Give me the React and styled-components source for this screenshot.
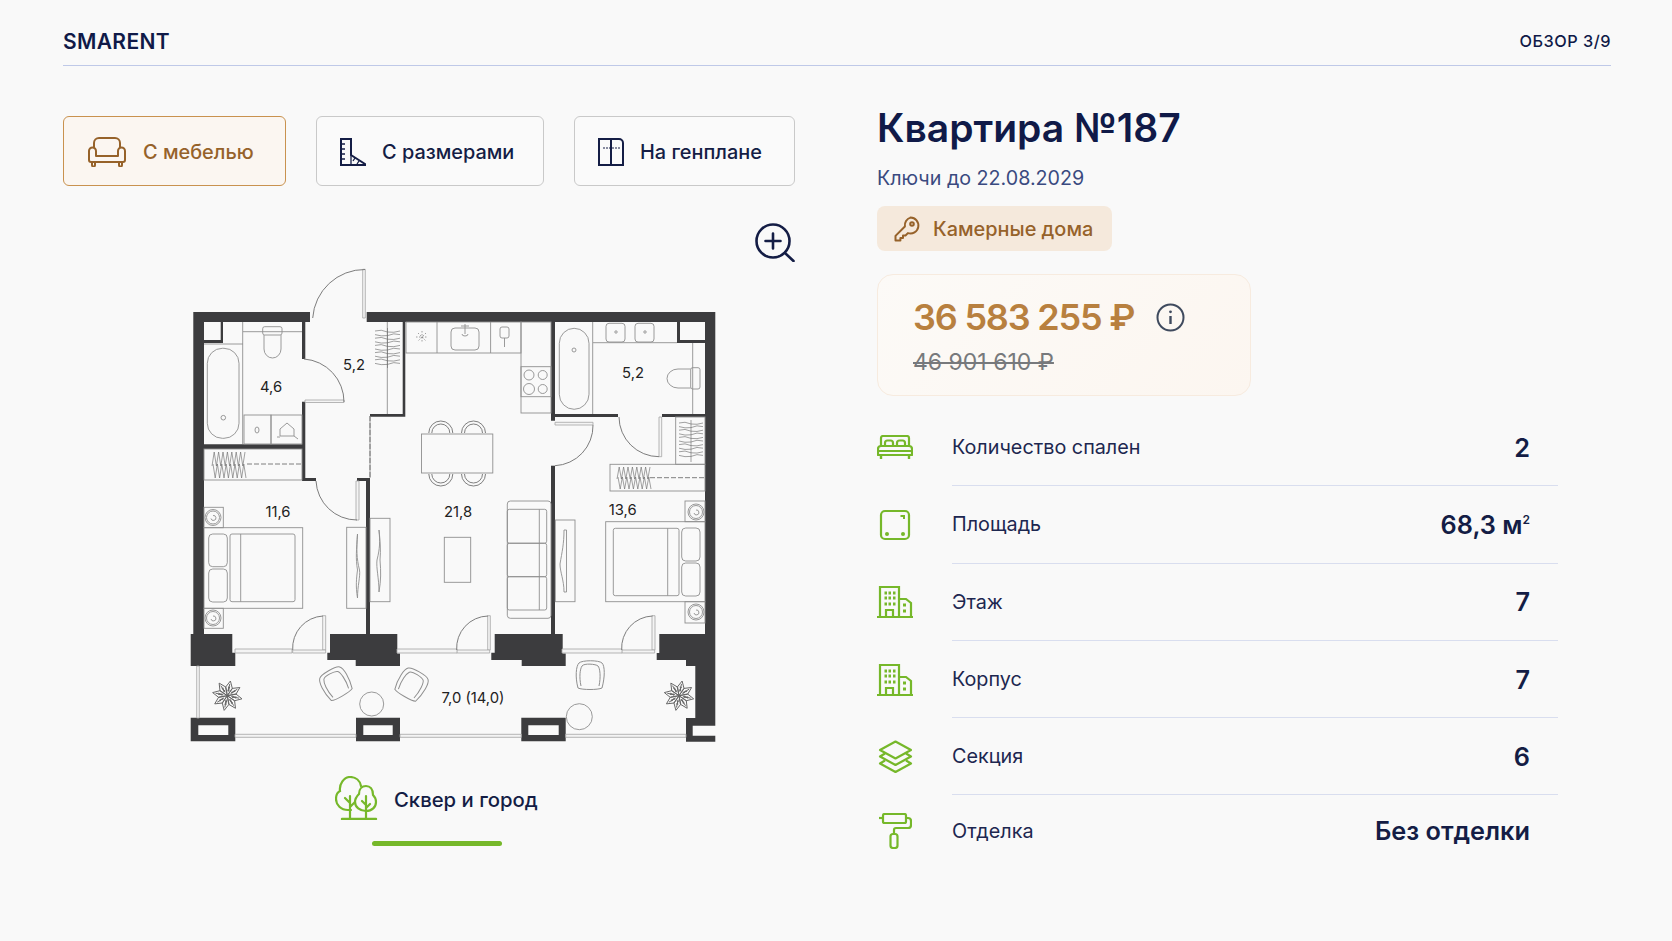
import React from "react";
import styled, { createGlobalStyle } from "styled-components";

const FONT = `Inter, "Noto Sans", "Liberation Sans", sans-serif`;
const GREEN = "#76b82a";
const BROWN = "#96622a";
const NAVY = "#141d45";
const WALL = "#3c3c3e";
const LINE = "#8f8f8f";

const GlobalStyle = createGlobalStyle`
  html, body { margin: 0; padding: 0; background: #f9f9f9; }
  body { font-family: ${FONT}; color: ${NAVY}; }
`;

const Page = styled.div`
  width: 1672px;
  height: 941px;
  overflow: hidden;
  box-sizing: border-box;
  padding: 0 61px 0 63px;
  background: #f9f9f9;
`;

const Header = styled.header`
  display: flex;
  justify-content: space-between;
  align-items: center;
  height: 66px;
  padding-top: 17px;
  box-sizing: border-box;
  border-bottom: 1px solid #bfc9e8;
`;

const Logo = styled.div`
  font-size: 21px;
  font-weight: 600;
  letter-spacing: 0.35px;
  color: #101a48;
`;

const Counter = styled.div`
  font-size: 16.3px;
  font-weight: 500;
  letter-spacing: 0.5px;
  color: #101a48;
`;

const Main = styled.main`
  display: grid;
  grid-template-columns: 732px 1fr;
  column-gap: 82px;
`;

const Left = styled.section`
  display: flex;
  flex-direction: column;
  padding-top: 50px;
`;

const Tabs = styled.div`
  display: grid;
  grid-template-columns: 223px 228px 221px;
  column-gap: 30px;
`;

const Tab = styled.button`
  display: flex;
  align-items: center;
  gap: 16px;
  height: 70px;
  padding: 1px 0 0 23px;
  box-sizing: border-box;
  font-family: ${FONT};
  font-size: 19.9px;
  font-weight: 500;
  border-radius: 6px;
  color: ${({ $active }) => ($active ? BROWN : NAVY)};
  background: ${({ $active }) => ($active ? "#fbf6f1" : "#fafafa")};
  border: 1px solid ${({ $active }) => ($active ? "#c9924f" : "#c9c9c9")};
`;

const ZoomButton = styled.div`
  align-self: flex-end;
  height: 39px;
  width: 40px;
  margin-top: 37px;
  color: ${NAVY};
`;

const PlanSvg = styled.svg`
  display: block;
  width: 550px;
  height: 490px;
  margin: -2px 0 0 117px;
`;

const PlanLabel = styled.text`
  font-family: ${FONT};
  font-size: 14.8px;
  fill: #222;
  text-anchor: middle;
`;

const View = styled.div`
  display: flex;
  flex-direction: column;
  align-items: flex-start;
  margin: 26px 0 0 272px;
`;

const ViewTitle = styled.div`
  display: flex;
  align-items: center;
  gap: 16px;
  margin-bottom: 21px;
  font-size: 20.3px;
  font-weight: 500;
  color: ${NAVY};
`;

const ViewText = styled.span`
  margin-top: 2px;
`;

const ViewBar = styled.div`
  width: 130px;
  height: 5px;
  margin-left: 37px;
  border-radius: 3px;
  background: ${GREEN};
`;

const Right = styled.section`
  display: flex;
  flex-direction: column;
  align-items: flex-start;
  padding-top: 38px;
`;

const Title = styled.h1`
  margin: 0;
  font-size: 39px;
  line-height: 48px;
  font-weight: 600;
  color: #101a48;
`;

const Keys = styled.div`
  margin-top: 13px;
  font-size: 19.7px;
  line-height: 26px;
  color: #3a4a80;
`;

const Chip = styled.div`
  display: flex;
  align-items: center;
  gap: 13px;
  width: 235px;
  height: 45px;
  margin-top: 15px;
  padding-left: 17px;
  box-sizing: border-box;
  border-radius: 8px;
  font-size: 19.9px;
  font-weight: 500;
  color: ${BROWN};
  background: #f5e9dc;
`;

const PriceCard = styled.div`
  display: flex;
  flex-direction: column;
  width: 374px;
  height: 122px;
  margin-top: 23px;
  padding: 20px 0 0 35px;
  box-sizing: border-box;
  border: 1px solid #f7ebdf;
  border-radius: 16px;
  background: linear-gradient(135deg, #fcfaf7, #fcf6f0);
`;

const PriceRow = styled.div`
  display: flex;
  align-items: center;
  gap: 22px;
`;

const Price = styled.div`
  font-size: 36px;
  line-height: 44px;
  font-weight: 600;
  letter-spacing: -1.2px;
  color: #b8803f;
`;

const OldPrice = styled.div`
  margin-top: 8px;
  font-size: 23px;
  line-height: 30px;
  color: #77797c;
  text-decoration: line-through;
`;

const Specs = styled.ul`
  width: 681px;
  margin: 13px 0 0;
  padding: 0;
  list-style: none;
`;

const Spec = styled.li`
  display: grid;
  grid-template-columns: 75px 1fr;
  align-items: stretch;
  height: ${({ $last }) => ($last ? "71px" : "77.3px")};
`;

const SpecIcon = styled.div`
  display: flex;
  align-items: center;
  justify-content: center;
  width: 36px;
  color: ${GREEN};
`;

const SpecBody = styled.div`
  display: flex;
  justify-content: space-between;
  align-items: center;
  padding-right: 28px;
  border-bottom: ${({ $last }) => ($last ? "none" : "1px solid #d9deef")};
`;

const SpecLabel = styled.span`
  font-size: 19.8px;
  color: #1d2750;
`;

const SpecValue = styled.span`
  font-size: 25.3px;
  font-weight: 600;
  color: ${NAVY};

  sup {
    font-size: 12px;
    line-height: 0;
    vertical-align: 10px;
  }
`;

const SofaIcon = () => (
  <svg width="40" height="30" viewBox="0 0 40 30" fill="none" stroke="currentColor" strokeWidth="2" strokeLinejoin="round">
    <path d="M7 11V6a5 5 0 0 1 5-5h16a5 5 0 0 1 5 5v5" />
    <path d="M9 19v-5a3.5 3.5 0 0 0-7 0v9a2 2 0 0 0 2 2h32a2 2 0 0 0 2-2v-9a3.5 3.5 0 0 0-7 0v5z" />
    <path d="M5 25v3a1.5 1.5 0 0 0 3 0v-3M32 25v3a1.5 1.5 0 0 0 3 0v-3" />
  </svg>
);

const RulerIcon = () => (
  <svg width="26" height="28" viewBox="0 0 26 28" fill="none" stroke="currentColor" strokeWidth="2">
    <path d="M1 1h10v16l14 9v1H1z" />
    <path d="M1 6h4M1 11h4M1 16h4M1 21h4M11 17v10M15 20l-2 3M19 23l-2 3" strokeWidth="1.3" />
  </svg>
);

const WindowIcon = () => (
  <svg width="26" height="28" viewBox="0 0 26 28" fill="none" stroke="currentColor" strokeWidth="2">
    <path d="M1 1h20a4 4 0 0 1 4 4v22H1zM13 1v26" />
    <path d="M5 10h18" strokeWidth="1" strokeDasharray="2 1" />
  </svg>
);

const ZoomPlus = () => (
  <svg width="40" height="39" viewBox="0 0 40 39" fill="none" stroke="currentColor" strokeWidth="2.6" strokeLinecap="round">
    <circle cx="18" cy="18" r="16.5" />
    <path d="M18 10.5v15M10.5 18h15" />
    <path d="M30 30l8.5 8" />
  </svg>
);

const KeyIcon = () => (
  <svg width="26" height="26" viewBox="0 0 26 26" fill="none" stroke="currentColor" strokeWidth="2" strokeLinejoin="round">
    <path d="M16.5 1.5a8 8 0 1 1-2.6 15.6l-2.4 2.4H9v2.6H6.4v2.4H1.5v-4.6l9.4-9.4a8 8 0 0 1 5.6-8.9z" />
    <circle cx="18" cy="8" r="1.8" />
  </svg>
);

const InfoIcon = () => (
  <svg width="29" height="29" viewBox="0 0 29 29" fill="none" stroke="#3f4a5e" strokeWidth="2">
    <circle cx="14.5" cy="14.5" r="13" />
    <path d="M14.5 13v8" strokeWidth="2.4" />
    <circle cx="14.5" cy="8.8" r="1.4" fill="#3f4a5e" stroke="none" />
  </svg>
);

const BedIcon = () => (
  <svg width="36" height="25" viewBox="0 0 36 25" fill="none" stroke="currentColor" strokeWidth="2.2" strokeLinejoin="round">
    <path d="M4 11V3a2 2 0 0 1 2-2h24a2 2 0 0 1 2 2v8" />
    <path d="M8 11V8a2.5 2.5 0 0 1 2.5-2.5h3A2.5 2.5 0 0 1 16 8v3M20 11V8a2.5 2.5 0 0 1 2.5-2.5h3A2.5 2.5 0 0 1 28 8v3" />
    <path d="M1 14a3 3 0 0 1 3-3h28a3 3 0 0 1 3 3v6H1zM1 16h34" />
    <path d="M4 20v4M32 20v4" strokeWidth="2.4" />
  </svg>
);

const AreaIcon = () => (
  <svg width="32" height="32" viewBox="0 0 32 32" fill="none" stroke="currentColor" strokeWidth="2.2">
    <rect x="2" y="2" width="28" height="28" rx="4" />
    <path d="M21.5 7h3.5v3" strokeWidth="2" />
    <circle cx="8" cy="25" r="2" fill="currentColor" stroke="none" />
    <circle cx="24" cy="25" r="2" fill="currentColor" stroke="none" />
  </svg>
);

const BuildingIcon = () => (
  <svg width="36" height="32" viewBox="0 0 36 32" fill="none" stroke="currentColor" strokeWidth="2.2">
    <path d="M0 31h36M3 31V1h19v30M22 13h7l5 4v14" />
    <path d="M9 31v-7h7v7" />
    <path d="M7.5 7h2.5M11.5 7h2.5M16 7h2.5M7.5 12h2.5M11.5 12h2.5M16 12h2.5M7.5 18h2.5M11.5 18h2.5M16 18h2.5M26 19h3M26 25h3" strokeWidth="2.8" />
  </svg>
);

const LayersIcon = () => (
  <svg width="35" height="33" viewBox="0 0 35 33" fill="none" stroke="currentColor" strokeWidth="2.2" strokeLinejoin="round">
    <path d="M17.5 1.5L33 10l-15.5 8.5L2 10z" />
    <path d="M7 13.5L2 16.5l15.5 8.5L33 16.5l-5-3" />
    <path d="M7 20.5L2 23.5l15.5 8.5L33 23.5l-5-3" />
  </svg>
);

const RollerIcon = () => (
  <svg width="34" height="36" viewBox="0 0 34 36" fill="none" stroke="currentColor" strokeWidth="2.2" strokeLinejoin="round">
    <rect x="5" y="1" width="23" height="9" rx="1.5" />
    <path d="M5 5H1" />
    <path d="M28 5h2a3 3 0 0 1 3 3v4a3 3 0 0 1-3 3H18a2 2 0 0 0-2 2v4" />
    <rect x="12.5" y="21" width="7" height="14" rx="2.5" />
  </svg>
);

const TreesIcon = () => (
  <svg width="43" height="44" viewBox="0 0 43 44" fill="none" stroke={GREEN} strokeWidth="2.2" strokeLinecap="round">
    <path d="M16 34h-3C6 34 1 29 1 23c0-4 2-7 4-8-1-7 4-14 10-14s10 4 11 9" />
    <path d="M15 43V20M15 27l-5-5M15 31l5-5" />
    <path d="M31 35c6 0 10-4 10-9 0-3-2-6-3-7 0-6-3-9-7-9s-7 3-7 8c-2 2-4 5-4 8 0 5 5 9 11 9z" />
    <path d="M31 43V20M31 29l-4-4M31 32l4-4" />
    <path d="M7 43h34" strokeWidth="2.4" />
  </svg>
);

// walls of the flat, in page coordinates
const WALLS = [
  "M193.3 312H310V322H204V634H193.3Z",
  "M220.7 322H223V343H204V340H220.7Z",
  "M302 322H305.3V359H302Z",
  "M302 401.7H305.3V478H316V481H302Z",
  "M204 444.3H302V449H204Z",
  "M366.7 312H715.3V322H366.7Z",
  "M705 322H715.3V725.7H692.7V735.7H715.3V741.7H686V718H695.3V666H686V660H656.7V653H659.3V634H705Z",
  "M402.7 322H405.3V416.7H370V414H402.7Z",
  "M366 478H370V634H366V481H357V478Z",
  "M551 322H555V414H618V417H555V420.7H551Z",
  "M551 465.7H555V634H551Z",
  "M662 414H705V417H662Z",
  "M677 322H680V340H705V343H677Z",
  "M190.7 634H232.3V652.7H235.3V666H190.7Z",
  "M330 634H397.3V653.5H400V666H355.7V660H327.3V652.7H330Z",
  "M494.7 634H562.7V653.5H565.7V666H521.7V660H491.3V652.7H494.7Z",
  "M190.7 717.7H235.3V741.3H190.7ZM198.3 725.3V735H228.3V725.3Z",
  "M356 717.7H400V741.3H356ZM363.3 725.3V735H392.7V725.3Z",
  "M521.3 717.7H565.7V741.3H521.3ZM528.3 725.3V735H558.7V725.3Z",
];

// door leafs and windows
const THIN = [
  "M362.7 269.3h2.6V318h-2.6z",
  "M305 400h39v2.5h-39z",
  "M356 481h3v39h-3z",
  "M555 422.3h38v2.7h-38z",
  "M659 417h2.7v39.7H659z",
  "M322.7 615.7h3V650h-3z",
  "M487.7 615.7h2.6V650h-2.6z",
  "M652 615.7h3V650h-3z",
  "M292.7 650h33v3h-33z",
  "M456.7 650h33v3h-33z",
  "M621.7 650h33v3h-33z",
  "M235 649h57v4h-57z",
  "M397 649h60v4h-60z",
  "M562 649h60v4h-60z",
  "M196.7 666h2.6v52h-2.6z",
  "M235 734.3h121v3H235z",
  "M400 734.3h121.3v3H400z",
  "M565.7 734.3H686v3H565.7z",
];

const ARCS = [
  "M365 269.5A52 52 0 0 0 312.7 318",
  "M304 359A43 43 0 0 1 344 402",
  "M316 481A41 41 0 0 0 357 520",
  "M593 425A40 40 0 0 1 555 465.7",
  "M619 417A40 40 0 0 0 659 456.7",
  "M323 616A32 32 0 0 0 292.7 650",
  "M488 616A32 32 0 0 0 456.7 650",
  "M652.5 616A32 32 0 0 0 621.7 650",
];

const RECTS = [
  // left bath
  [207.3, 348.3, 31.7, 90, 15], [262.7, 326.7, 19.3, 8.3, 2], [244, 415, 27, 29, 0], [271, 415, 31, 29, 0],
  // kitchen
  [406, 322, 115, 31, 0], [451, 328, 28, 22, 4], [500, 327, 9, 11, 2], [521, 322, 30, 91, 0], [521, 366.7, 30, 30, 0],
  // table, sofa
  [421.5, 434, 71.3, 39, 0], [507.3, 501, 43.7, 117.3, 3], [507.3, 509.3, 39.4, 33.9, 2],
  [507.3, 543.3, 39.4, 33.4, 2], [507.3, 576.7, 39.4, 33.3, 2], [444.3, 537.3, 26.4, 45, 0],
  // tv units
  [370, 518.3, 20, 83.4, 0], [346.7, 527.3, 19.3, 81, 0], [555.3, 520, 19.7, 81.7, 0],
  // left bedroom
  [204, 527.7, 98.7, 80.6, 0], [230, 534, 65, 67.7, 2], [208.7, 534, 18.6, 32.7, 4], [208.7, 569, 18.6, 33, 4],
  [204, 507.3, 19.3, 20.4, 0], [204, 608.3, 19.3, 20, 0],
  // closets
  [204, 449, 98, 31, 0], [610, 464.3, 95, 26.7, 0], [675.7, 417, 29.3, 47.3, 0],
  // right bedroom
  [605.7, 521.7, 99.3, 80, 0], [613.3, 528.3, 65.7, 67.4, 2], [681.7, 528, 18.3, 33, 4], [681.7, 563, 18.3, 33, 4],
  [685, 501, 20, 20.7, 0], [685, 601.7, 20, 21.3, 0],
  // right bath
  [559.3, 328.3, 29.7, 81, 15], [606, 323.3, 19, 18.7, 3], [635, 323.3, 19, 18.7, 3], [690.7, 367.7, 9.3, 21.3, 2],
];

const STRAIGHT = [
  "M242.7 322V444M204 344H243M243 331.7H302",
  "M264 335v14a8.5 9 0 0 0 17 0v-14",
  "M387.3 322V414",
  "M437 322V353M490.6 322V353M504.5 338V347",
  "M465 324v10M461 326h8M462 334a3 2 0 0 0 6 0",
  "M539.3 509.3V610",
  "M240.7 534V601.7M667.7 528.3V595.7",
  "M592.7 322V414M593 342.7H677M692.7 343V414",
  "M690.7 369H678a11 9.5 0 0 0 0 19h12.7",
  "M370 416V478",
];

// wavy hangers of the wardrobes
const hangersAcross = (x0, x1, y0, y1) => {
  const mid = (y0 + y1) / 2;
  let top = "";
  let bottom = "";
  for (let x = x0, i = 0; x <= x1; x += 2.2, i++) {
    top += `${i ? "L" : "M"}${x} ${i % 2 ? y0 : mid + 1}`;
    bottom += `${i ? "L" : "M"}${x + 1} ${i % 2 ? y1 : mid - 1}`;
  }
  return top + bottom;
};

const hangersDown = (x0, x1, y0, y1) => {
  const mid = (x0 + x1) / 2;
  let d = `M${mid} ${y0 - 3}V${y1 + 3}`;
  for (let y = y0, i = 0; y <= y1; y += 3.6, i++) {
    const wob = i % 2 ? 2 : -2;
    d += `M${x0} ${y}Q${(x0 + mid) / 2} ${y + wob} ${mid} ${y + 1}Q${(x1 + mid) / 2} ${y - wob} ${x1} ${y}`;
  }
  return d;
};

const Armchair = ({ x, y, angle }) => (
  <g transform={`translate(${x} ${y}) rotate(${angle})`} fill="none" stroke={LINE} strokeWidth="1">
    <path d="M-12 13C-15 2-14-9-11-12S9-15 12-12 15 2 12 13C8 15-8 15-12 13Z" />
    <path d="M-9 11C-11 2-10-6-8-9S6-11 8-9 11 2 9 11" />
  </g>
);

const Plant = ({ x, y }) => (
  <g transform={`translate(${x} ${y})`} fill="none" stroke="#666" strokeWidth="0.9">
    {[0, 45, 90, 135, 180, 225, 270, 315].map((a) => (
      <path key={a} transform={`rotate(${a + 12})`} d="M0 0L-3.5-8 0-15 3.5-8ZM0-4V-12M-3-4L-7-6M3-4L7-6" />
    ))}
  </g>
);

const Nightstand = ({ x, y }) => (
  <g transform={`translate(${x} ${y})`}>
    <circle r="8" />
    <circle r="6.5" />
    <path d="M-2 1a2.5 2.5 0 1 0 2-3" />
  </g>
);

const FloorPlan = () => (
  <PlanSvg viewBox="180 260 550 490">
    <g fill={WALL}>
      {WALLS.map((d) => (
        <path key={d} d={d} fillRule="evenodd" />
      ))}
    </g>
    <g fill="#f4f4f4" stroke="#a5a5a5" strokeWidth="0.8">
      {THIN.map((d) => (
        <path key={d} d={d} />
      ))}
    </g>
    <g fill="none" stroke="#7d7d7d" strokeWidth="1">
      {ARCS.map((d) => (
        <path key={d} d={d} />
      ))}
    </g>
    <g fill="none" stroke={LINE} strokeWidth="0.9">
      {RECTS.map(([x, y, w, h, r]) => (
        <rect key={`${x}-${y}`} x={x} y={y} width={w} height={h} rx={r} />
      ))}
      {STRAIGHT.map((d) => (
        <path key={d} d={d} />
      ))}
      <circle cx="223.3" cy="417.7" r="2.3" />
      <circle cx="574" cy="350" r="2" />
      <circle cx="616" cy="332" r="1.2" />
      <circle cx="645" cy="332" r="1.2" />
      <ellipse cx="257" cy="430" rx="2" ry="3" />
      <path d="M280 436v-7l7-6 7 6v7zM277 437h3M294 436l4 3" />
      <circle cx="529" cy="375" r="5" />
      <circle cx="542.7" cy="375" r="4.5" />
      <circle cx="529" cy="389" r="5.5" />
      <circle cx="542.7" cy="389" r="4.5" />
      <Nightstand x={213} y={517.5} />
      <Nightstand x={213} y={618} />
      <Nightstand x={696} y={512} />
      <Nightstand x={696} y={612} />
      <circle cx="371.7" cy="704" r="12" />
      <circle cx="579.3" cy="716.7" r="13" />
      <path d="M357.5 534c-1 16-1 24 2 36 1 6-2 16-2 28-2-12-1-20 0-28-2-12-1-20 0-36zM379 530c1 12 1 18-2 30-1 8 2 18 2 32 2-12 2-20 1-32 1-10 0-20-1-30zM564 530h2.5v62h-2.5c0-12-4-20-4-28 2-12 4-20 4-34z" />
    </g>
    <g fill="none" stroke="#707070" strokeWidth="0.65">
      <path d={hangersAcross(212, 247, 452, 478)} />
      <path d={hangersAcross(617, 652, 467, 489)} />
      <path d={hangersDown(375, 400, 331, 365)} />
      <path d={hangersDown(679, 703, 423, 459)} />
      <path d="M416 337h12M422 331v12M418 333l8 8M426 333l-8 8" strokeDasharray="1.5 1.5" />
      <path d="M247 464H302M650 477.7H705M370 416V478" strokeDasharray="5 2" strokeWidth="0.9" />
      {[440.8, 473.5].map((x) => (
        <g key={x} strokeWidth="0.9">
          <path d={`M${x - 12} 433a12 12 0 1 1 24 0M${x - 9} 433a9 9 0 1 1 18 0`} />
          <path d={`M${x - 12} 474a12 12 0 1 0 24 0M${x - 9} 474a9 9 0 1 0 18 0`} />
        </g>
      ))}
    </g>
    <Armchair x={335.3} y={683.3} angle={-30} />
    <Armchair x={411.7} y={684} angle={30} />
    <Armchair x={590} y={675} angle={0} />
    <Plant x={227.3} y={695.7} />
    <Plant x={679} y={695.7} />
    <PlanLabel x="271" y="392">4,6</PlanLabel>
    <PlanLabel x="354" y="370">5,2</PlanLabel>
    <PlanLabel x="278" y="517">11,6</PlanLabel>
    <PlanLabel x="458" y="517">21,8</PlanLabel>
    <PlanLabel x="622.7" y="515">13,6</PlanLabel>
    <PlanLabel x="633" y="378">5,2</PlanLabel>
    <PlanLabel x="473" y="703">7,0 (14,0)</PlanLabel>
  </PlanSvg>
);

const SPECS = [
  { label: "Количество спален", value: "2", icon: <BedIcon /> },
  { label: "Площадь", value: <>68,3 м<sup>2</sup></>, icon: <AreaIcon /> },
  { label: "Этаж", value: "7", icon: <BuildingIcon /> },
  { label: "Корпус", value: "7", icon: <BuildingIcon /> },
  { label: "Секция", value: "6", icon: <LayersIcon /> },
  { label: "Отделка", value: "Без отделки", icon: <RollerIcon /> },
];

const App = () => {
  return (
    <Page>
      <GlobalStyle />
      <Header>
        <Logo>SMARENT</Logo>
        <Counter>ОБЗОР 3/9</Counter>
      </Header>
      <Main>
        <Left>
          <Tabs>
            <Tab $active>
              <SofaIcon />
              С мебелью
            </Tab>
            <Tab>
              <RulerIcon />
              С размерами
            </Tab>
            <Tab>
              <WindowIcon />
              На генплане
            </Tab>
          </Tabs>
          <ZoomButton>
            <ZoomPlus />
          </ZoomButton>
          <FloorPlan />
          <View>
            <ViewTitle>
              <TreesIcon />
              <ViewText>Сквер и город</ViewText>
            </ViewTitle>
            <ViewBar />
          </View>
        </Left>
        <Right>
          <Title>Квартира №187</Title>
          <Keys>Ключи до 22.08.2029</Keys>
          <Chip>
            <KeyIcon />
            Камерные дома
          </Chip>
          <PriceCard>
            <PriceRow>
              <Price>36 583 255 ₽</Price>
              <InfoIcon />
            </PriceRow>
            <OldPrice>46 901 610 ₽</OldPrice>
          </PriceCard>
          <Specs>
            {SPECS.map((spec, i) => {
              const last = i === SPECS.length - 1;
              return (
                <Spec key={spec.label} $last={last}>
                  <SpecIcon>{spec.icon}</SpecIcon>
                  <SpecBody $last={last}>
                    <SpecLabel>{spec.label}</SpecLabel>
                    <SpecValue>{spec.value}</SpecValue>
                  </SpecBody>
                </Spec>
              );
            })}
          </Specs>
        </Right>
      </Main>
    </Page>
  );
};

export default App;
